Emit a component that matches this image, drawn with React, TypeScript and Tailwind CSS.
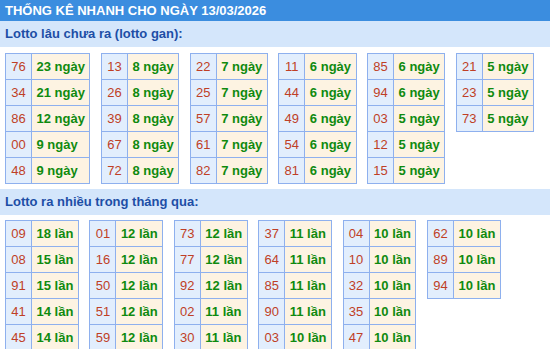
import React from "react";

type Row = [string, string];

const gan: Row[][] = [
  [["76", "23"], ["34", "21"], ["86", "12"], ["00", "9"], ["48", "9"]],
  [["13", "8"], ["26", "8"], ["39", "8"], ["67", "8"], ["72", "8"]],
  [["22", "7"], ["25", "7"], ["57", "7"], ["61", "7"], ["82", "7"]],
  [["11", "6"], ["44", "6"], ["49", "6"], ["54", "6"], ["81", "6"]],
  [["85", "6"], ["94", "6"], ["03", "5"], ["12", "5"], ["15", "5"]],
  [["21", "5"], ["23", "5"], ["73", "5"]],
];

const nhieu: Row[][] = [
  [["09", "18"], ["08", "15"], ["91", "15"], ["41", "14"], ["45", "14"]],
  [["01", "12"], ["16", "12"], ["50", "12"], ["51", "12"], ["59", "12"]],
  [["73", "12"], ["77", "12"], ["92", "12"], ["02", "11"], ["30", "11"]],
  [["37", "11"], ["64", "11"], ["85", "11"], ["90", "11"], ["03", "10"]],
  [["04", "10"], ["10", "10"], ["32", "10"], ["35", "10"], ["47", "10"]],
  [["62", "10"], ["89", "10"], ["94", "10"]],
];

function Table({ rows, unit }: { rows: Row[]; unit: string }) {
  return (
    <div className="flex flex-col self-start border-t border-l border-[#8eb0ee]">
      {rows.map(([n, v], i) => (
        <div key={i} className="flex h-[26px]">
          <div className="flex w-[26px] shrink-0 items-center justify-center bg-[#e2eefd] border-r border-b border-[#8eb0ee] text-[#bf3f26] text-[13px]">
            {n}
          </div>
          <div className="flex flex-1 items-center px-[4.5px] bg-[#fdf3e2] border-r border-b border-[#8eb0ee] text-[#0f8a0f] text-[13px] font-bold">
            {v} {unit}
          </div>
        </div>
      ))}
    </div>
  );
}

function Band({ children }: { children: React.ReactNode }) {
  return (
    <div className="h-[26px] flex items-center pl-[5px] bg-[#d4e6fb] text-[#1d4ea6] text-[13px] font-bold">
      {children}
    </div>
  );
}

export default function App() {
  return (
    <div
      className="w-[550px] h-[349px] overflow-hidden bg-white"
      style={{ fontFamily: '"Liberation Sans", Arial, sans-serif' }}
    >
      <div className="h-[21px] flex items-center pl-[5px] bg-[#3b8ddf] text-white text-[13px] font-bold">
        THỐNG KÊ NHANH CHO NGÀY 13/03/2026
      </div>
      <Band>Lotto lâu chưa ra (lotto gan):</Band>
      <div className="flex gap-[10.5px] pl-[5px] pt-[6px] pb-[5px]">
        {gan.map((t, i) => (
          <Table key={i} rows={t} unit="ngày" />
        ))}
      </div>
      <Band>Lotto ra nhiều trong tháng qua:</Band>
      <div className="flex gap-[10.5px] pl-[5px] pt-[5px]">
        {nhieu.map((t, i) => (
          <Table key={i} rows={t} unit="lần" />
        ))}
      </div>
    </div>
  );
}
